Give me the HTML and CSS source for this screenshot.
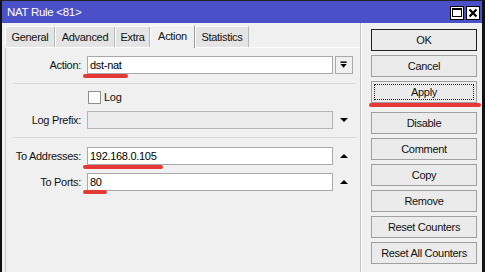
FILE: index.html
```html
<!DOCTYPE html>
<html>
<head>
<meta charset="utf-8">
<link rel="stylesheet" href="styles.css">
</head>
<body>
<div class="window">
  <div class="titlebar">
    <span class="title">NAT Rule &lt;81&gt;</span>
    <div class="tb-buttons">
      <span class="tb-btn"><span class="max-inner"></span></span>
      <span class="tb-btn">
        <svg width="12" height="12" viewBox="0 0 12 12"><path d="M2.5 2.5 L9.5 9.5 M9.5 2.5 L2.5 9.5" stroke="#000" stroke-width="2.2" fill="none"/></svg>
      </span>
    </div>
  </div>
  <div class="body">
    <div class="main">
      <div class="tabs">
        <div class="tab w-general">General</div>
        <div class="tab w-advanced">Advanced</div>
        <div class="tab w-extra">Extra</div>
        <div class="tab active w-action">Action</div>
        <div class="tab w-stats">Statistics</div>
      </div>
      <div class="panel">
        <div class="row first">
          <span class="label">Action:</span>
          <span class="field">dst-nat</span>
          <span class="iconbox boxed">
            <svg width="18" height="16" viewBox="0 0 18 16"><rect x="5" y="4" width="7" height="1.6" fill="#000"/><path d="M5 7 L12 7 L8.5 11 Z" fill="#000"/></svg>
          </span>
          <span class="mark mark-action"></span>
        </div>
        <div class="sep"></div>
        <div class="row">
          <span class="label"></span>
          <span class="check"><span class="box"></span><span class="check-text">Log</span></span>
        </div>
        <div class="row gap5">
          <span class="label">Log Prefix:</span>
          <span class="field disabled"></span>
          <span class="iconbox">
            <svg width="18" height="18" viewBox="0 0 18 18"><path d="M5 7 L13 7 L9 11 Z" fill="#000"/></svg>
          </span>
        </div>
        <div class="sep sep2"></div>
        <div class="row">
          <span class="label">To Addresses:</span>
          <span class="field">192.168.0.105</span>
          <span class="iconbox">
            <svg width="18" height="18" viewBox="0 0 18 18"><path d="M5 11 L13 11 L9 7 Z" fill="#000"/></svg>
          </span>
          <span class="mark mark-addr"></span>
        </div>
        <div class="row gap8">
          <span class="label">To Ports:</span>
          <span class="field">80</span>
          <span class="iconbox">
            <svg width="18" height="18" viewBox="0 0 18 18"><path d="M5 11 L13 11 L9 7 Z" fill="#000"/></svg>
          </span>
          <span class="mark mark-ports"></span>
        </div>
      </div>
    </div>
    <div class="side">
      <div class="btn default">OK</div>
      <div class="btn">Cancel</div>
      <div class="btn focus">Apply<span class="mark mark-apply"></span></div>
      <div class="btn spaced">Disable</div>
      <div class="btn">Comment</div>
      <div class="btn">Copy</div>
      <div class="btn">Remove</div>
      <div class="btn">Reset Counters</div>
      <div class="btn">Reset All Counters</div>
    </div>
  </div>
</div>
</body>
</html>
```

FILE: styles.css
```css
* { box-sizing: border-box; }
html, body {
  margin: 0;
  padding: 0;
  background: #ffffff;
}
body {
  font-family: "Liberation Sans", Arial, sans-serif;
  font-size: 11px;
  letter-spacing: -0.3px;
  color: #111;
}
.window {
  width: 485px;
  height: 272px;
  display: flex;
  flex-direction: column;
  border-left: 2px solid #111;
  border-right: 3px solid #111;
  border-top: 1px solid #222;
  background: #f0f0f0;
  overflow: hidden;
}
.titlebar {
  height: 22px;
  background: #4a50c8;
  display: flex;
  align-items: center;
  justify-content: space-between;
  padding: 0 2px 0 5px;
  flex: none;
}
.title {
  color: #fff;
  font-size: 11.5px;
}
.tb-buttons {
  display: flex;
  gap: 2px;
  margin-top: 1px;
}
.tb-btn {
  width: 14px;
  height: 14px;
  background: #fff;
  border: 1px solid #000;
  display: flex;
  align-items: center;
  justify-content: center;
}
.max-inner {
  width: 10px;
  height: 9px;
  border: 1px solid #000;
  border-top-width: 2px;
}
.body {
  flex: 1;
  display: flex;
}
.main {
  width: 360px;
  display: flex;
  flex-direction: column;
  padding-left: 3px;
  border-right: 1px solid #c4c4c4;
}
.tabs {
  height: 24px;
  display: flex;
  align-items: flex-end;
  flex: none;
}
.tab {
  height: 21px;
  background: #e4e4e4;
  border-top: 1px solid #fff;
  border-left: 1px solid #fff;
  border-right: 1px solid #b8b8b8;
  display: flex;
  align-items: center;
  justify-content: center;
  padding-bottom: 1px;
}
.tab.active {
  height: 23px;
  background: #f0f0f0;
  border-right-color: #9a9a9a;
  margin-bottom: -1px;
  position: relative;
  padding-bottom: 3px;
}
.w-general { width: 50px; }
.w-advanced { width: 60px; }
.w-extra { width: 35px; }
.w-action { width: 45px; }
.w-stats { width: 54px; }
.panel {
  flex: 1;
  border-top: 1px solid #fff;
  border-left: 1px solid #c8c8c8;
  padding-top: 8px;
  display: flex;
  flex-direction: column;
}
.row {
  display: flex;
  align-items: center;
  height: 18px;
  position: relative;
}
.gap5 { margin-top: 5px; }
.gap8 { margin-top: 8px; }
.label {
  width: 75px;
  margin-right: 6px;
  text-align: right;
  flex: none;
}
.field {
  width: 246px;
  height: 18px;
  background: #fff;
  border: 1px solid #a9a9a9;
  padding-left: 2px;
  line-height: 16px;
  color: #000;
  flex: none;
}
.field.disabled {
  background: #ececec;
  border-color: #b4b4b4;
}
.iconbox {
  width: 18px;
  height: 18px;
  margin-left: 2px;
  display: flex;
  align-items: center;
  justify-content: center;
  flex: none;
}
.iconbox.boxed {
  border: 1px solid #a9a9a9;
  background: #f0f0f0;
}
.sep {
  margin: 9px 0 4px 7px;
  width: 343px;
  height: 1px;
  background: #d9d9d9;
}
.sep2 { margin: 8px 0 9px 7px; }
.check {
  display: flex;
  align-items: center;
  margin-left: 1px;
}
.box {
  width: 13px;
  height: 13px;
  background: #fff;
  border: 1px solid #8e8e8e;
  margin-right: 3px;
}
.mark {
  position: absolute;
  background: #e53935;
  border-radius: 2px;
  height: 4px;
}
.mark-action { left: 77px; top: 18px; width: 45px; }
.mark-addr { left: 77px; top: 18px; width: 80px; height: 3.5px; }
.mark-ports { left: 77px; top: 17px; width: 24px; height: 3.5px; }
.side {
  flex: 1;
  display: flex;
  flex-direction: column;
  gap: 4px;
  padding: 6px 5px 0 9px;
  border-left: 1px solid #fff;
}
.btn {
  height: 22px;
  width: 106px;
  background: #ebebeb;
  border: 1px solid #a0a0a0;
  display: flex;
  align-items: center;
  justify-content: center;
  color: #111;
  position: relative;
  flex: none;
}
.btn.default { border-color: #222; }
.btn.focus {
  outline: 1px dotted #222;
  outline-offset: -4px;
}
.btn.spaced { margin-top: 5px; }
.mark-apply { left: -3px; top: 21px; width: 112px; }
```
